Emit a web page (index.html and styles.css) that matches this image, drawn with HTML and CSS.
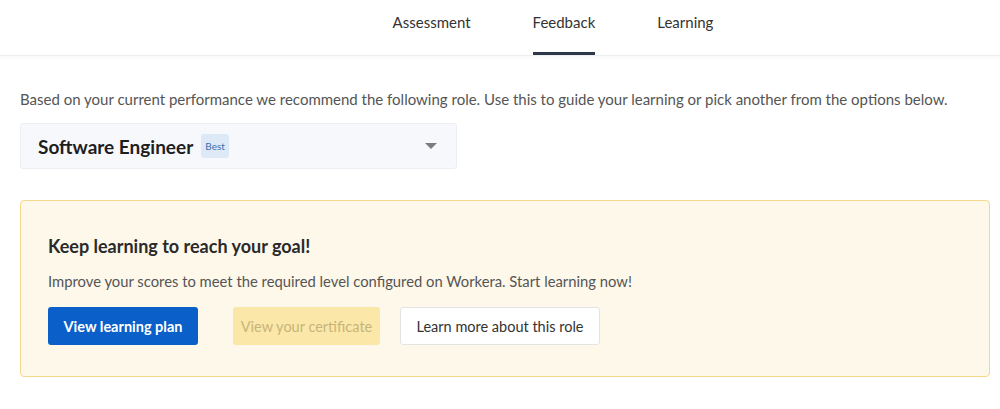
FILE: index.html
```html
<!DOCTYPE html>
<html lang="en">

<head>
    <meta charset="UTF-8">
    <meta name="viewport" content="width=device-width, initial-scale=1.0">
    <title>Feedback</title>
    <link rel="stylesheet" href="styles.css">
</head>

<body>
    <nav class="tabs">
        <a href="#" class="tab">Assessment</a>
        <a href="#" class="tab active">Feedback</a>
        <a href="#" class="tab">Learning</a>
    </nav>

    <main class="content">
        <p class="intro">Based on your current performance we recommend the following role. Use this to guide your learning or pick another from the options below.</p>

        <div class="role-select">
            <span class="role-name">Software Engineer</span>
            <span class="badge">Best</span>
            <span class="caret"></span>
        </div>

        <section class="goal-card">
            <h2>Keep learning to reach your goal!</h2>
            <p>Improve your scores to meet the required level configured on Workera. Start learning now!</p>
            <div class="actions">
                <button class="btn btn-primary">View learning plan</button>
                <button class="btn btn-disabled" disabled>View your certificate</button>
                <button class="btn btn-outline">Learn more about this role</button>
            </div>
        </section>
    </main>
</body>

</html>
```

FILE: styles.css
```css
body {
    margin: 0;
    font-family: 'Lato', 'Open Sans', sans-serif;
    background: #fff;
    color: #222;
}

.tabs {
    display: flex;
    justify-content: center;
    gap: 62px;
    height: 55px;
    border-bottom: 1px solid #eceef2;
    box-shadow: 0 2px 3px rgba(0, 0, 0, 0.03);
    padding-left: 106px;
}

.tab {
    display: flex;
    align-items: center;
    padding-bottom: 10px;
    margin-top: 2px;
    font-size: 15px;
    color: #333;
    text-decoration: none;
    border-bottom: 3px solid transparent;
}

.tab.active {
    border-bottom-color: #2d3748;
}

.content {
    padding: 0 20px;
}

.intro {
    margin: 34px 0 15px;
    font-size: 15px;
    line-height: 18px;
    color: #555;
}

.role-select {
    display: flex;
    align-items: center;
    width: 437px;
    height: 46px;
    box-sizing: border-box;
    padding: 0 17px;
    background: #f7f8fc;
    border: 1px solid #eceef3;
    border-radius: 3px;
}

.role-name {
    font-size: 19px;
    font-weight: bold;
    color: #1e1e1e;
}

.badge {
    margin-left: 8px;
    padding: 0 4px;
    line-height: 24px;
    font-size: 10px;
    color: #3a6fb0;
    background: #dde9f7;
    border-radius: 3px;
}

.caret {
    margin-left: auto;
    margin-right: 2px;
    width: 0;
    height: 0;
    border-left: 6px solid transparent;
    border-right: 6px solid transparent;
    border-top: 6px solid #7d7d7d;
}

.goal-card {
    margin-top: 31px;
    width: 970px;
    box-sizing: border-box;
    padding: 34px 27px 31px;
    background: #fdf8ea;
    border: 1px solid #f5d98a;
    border-radius: 4px;
}

.goal-card h2 {
    margin: 0;
    font-size: 18px;
    font-weight: bold;
    color: #2a2a2a;
}

.goal-card p {
    margin: 15px 0 17px;
    font-size: 14.8px;
    color: #555;
}

.actions {
    display: flex;
    gap: 20px;
}

.btn {
    height: 38px;
    padding: 0;
    font-family: inherit;
    font-size: 14.5px;
    border-radius: 3px;
    border: 1px solid transparent;
    cursor: pointer;
}

.btn-primary {
    width: 150px;
    background: #0a5fc9;
    color: #fff;
    font-weight: bold;
}

.btn-disabled {
    width: 147px;
    background: #fbe8a8;
    color: #c7b47a;
    margin-left: 15px;
    cursor: default;
}

.btn-outline {
    width: 200px;
    background: #fff;
    color: #333;
    border-color: #e4e4e4;
}
```
